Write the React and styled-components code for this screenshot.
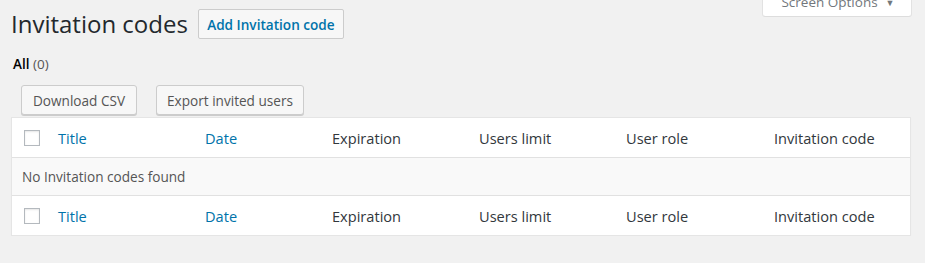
import React from "react";
import styled, { createGlobalStyle } from "styled-components";

const Global = createGlobalStyle`
  html, body { margin: 0; padding: 0; }
  body {
    background: #f1f1f1;
    font-family: "Open Sans", "Noto Sans", sans-serif;
    color: #444;
    font-size: 13px;
  }
`;

const Page = styled.div`
  padding: 0 14px 0 11px;
  width: 925px;
  box-sizing: border-box;
`;

const ScreenMeta = styled.div`
  float: right;
  margin-top: -12px;
  height: 28px;
  width: 148px;
  box-sizing: border-box;
  background: #fff;
  box-shadow: 0 1px 1px -1px rgba(0, 0, 0, 0.2), 0 0 0 1px #e2e2e2;
  border-radius: 0 0 2px 2px;
  display: flex;
  align-items: center;
  justify-content: center;
  gap: 8px;
  color: #72777c;
  font-size: 13.5px;
  padding-top: 0px;
  padding-left: 2px;
`;

const Arrow = styled.span`
  font-size: 9px;
`;

const TitleRow = styled.div`
  display: flex;
  align-items: center;
  gap: 10px;
  padding-top: 9px;
  height: 30px;
`;

const Title = styled.h1`
  margin: 0;
  font-size: 24px;
  font-weight: 400;
  line-height: 30px;
  color: #23282d;
`;

const AddButton = styled.a`
  display: inline-flex;
  align-items: center;
  box-sizing: border-box;
  height: 30px;
  width: 146px;
  justify-content: center;
  border: 1px solid #ccc;
  border-radius: 2px;
  background: #f7f7f7;
  color: #0073aa;
  font-weight: 600;
  font-size: 13.6px;
  text-decoration: none;
`;

const Subsub = styled.div`
  margin-top: 14px;
  padding-left: 2px;
  font-size: 13.5px;
  line-height: 22px;
`;

const Current = styled.span`
  color: #000;
  font-weight: 600;
`;

const Count = styled.span`
  color: #555;
`;

const Actions = styled.div`
  display: flex;
  gap: 19px;
  padding-left: 10px;
  margin-top: 10px;
  height: 32px;
`;

const Button = styled.button`
  box-sizing: border-box;
  height: 30px;
  width: ${(p) => p.$w}px;
  padding: 0;
  border: 1px solid #ccc;
  border-radius: 3px;
  background: #f7f7f7;
  box-shadow: 0 1px 0 #ccc;
  color: #555;
  font-family: inherit;
  font-size: 13.6px;
`;

const Table = styled.table`
  width: 900px;
  border: 1px solid #e5e5e5;
  border-spacing: 0;
  table-layout: fixed;
  background: #fff;
  box-shadow: 0 1px 1px rgba(0, 0, 0, 0.04);
`;

const HeadCell = styled.th`
  text-align: left;
  font-weight: 400;
  font-size: 14.6px;
  height: 40px;
  padding: 0 10px;
  box-sizing: border-box;
  color: ${(p) => (p.$sortable ? "#0073aa" : "#32373c")};
  border-${(p) => (p.$foot ? "top" : "bottom")}: 1px solid #e1e1e1;
  white-space: nowrap;
`;

const CheckCell = styled.td`
  padding: 0 0 0 12px;
  height: 40px;
  box-sizing: border-box;
  border-${(p) => (p.$foot ? "top" : "bottom")}: 1px solid #e1e1e1;
`;

const Box = styled.span`
  display: block;
  width: 16px;
  height: 16px;
  box-sizing: border-box;
  border: 1px solid #b4b9be;
  background: #fff;
  box-shadow: inset 0 1px 2px rgba(0, 0, 0, 0.1);
`;

const EmptyRow = styled.tr`
  background: #f9f9f9;
`;

const EmptyCell = styled.td`
  height: 37px;
  padding: 0 10px;
  color: #555;
  font-size: 13.6px;
`;

const cols = [
  { label: "Title", sortable: true },
  { label: "Date", sortable: true },
  { label: "Expiration" },
  { label: "Users limit" },
  { label: "User role" },
  { label: "Invitation code" },
];

const widths = [36, 147, 127, 147, 147, 148, 146];

function HeaderRow({ foot }) {
  return (
    <tr>
      <CheckCell $foot={foot}>
        <Box />
      </CheckCell>
      {cols.map((c) => (
        <HeadCell key={c.label} $sortable={c.sortable} $foot={foot}>
          {c.label}
        </HeadCell>
      ))}
    </tr>
  );
}

export default function App() {
  return (
    <Page>
      <Global />
      <ScreenMeta>
        Screen Options <Arrow>▼</Arrow>
      </ScreenMeta>
      <TitleRow>
        <Title>Invitation codes</Title>
        <AddButton href="#">Add Invitation code</AddButton>
      </TitleRow>
      <Subsub>
        <Current>All</Current> <Count>(0)</Count>
      </Subsub>
      <Actions>
        <Button $w={116}>Download CSV</Button>
        <Button $w={148}>Export invited users</Button>
      </Actions>
      <Table>
        <colgroup>
          {widths.map((w, i) => (
            <col key={i} style={{ width: w }} />
          ))}
        </colgroup>
        <thead>
          <HeaderRow />
        </thead>
        <tbody>
          <EmptyRow>
            <EmptyCell colSpan={7}>No Invitation codes found</EmptyCell>
          </EmptyRow>
        </tbody>
        <tfoot>
          <HeaderRow foot />
        </tfoot>
      </Table>
    </Page>
  );
}
